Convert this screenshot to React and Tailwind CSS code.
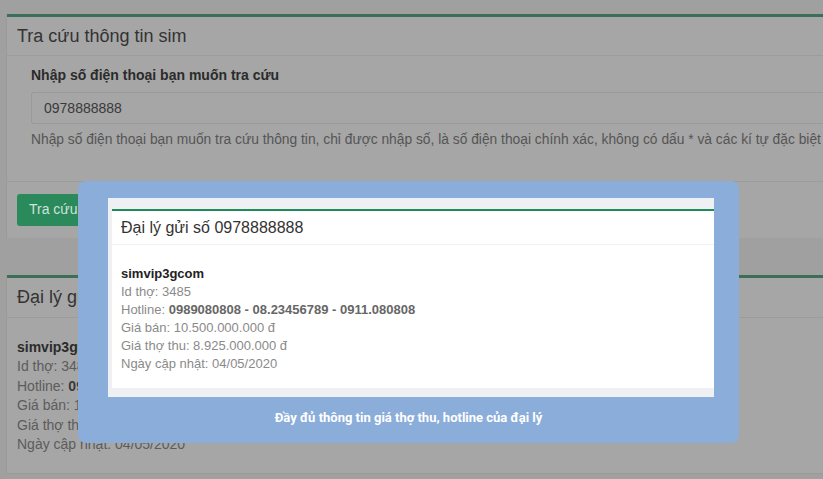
import React from "react";

const font = { fontFamily: '"Liberation Sans", Arial, sans-serif' };

// Trang nền (đã bị phủ mờ bởi lớp overlay)
const LookupCard = () => (
  <div className="ml-[6px] mt-[14px] bg-[#a6a6a6] border-l border-[#9a9a9a]">
    <div className="h-[3px] bg-[#3c6e58]" />
    <div className="h-[39px] flex items-center pl-[10px] border-b border-[#9c9c9c]">
      <h2 className="text-[18px] text-[#333]">Tra cứu thông tin sim</h2>
    </div>
    <div className="pl-[24px] pt-[9px] pb-[30px] border-b border-[#9c9c9c]">
      <label className="block text-[14px] font-bold text-[#2b2b2b] mb-[6px]">
        Nhập số điện thoại bạn muốn tra cứu
      </label>
      <div className="h-[32px] border border-[#9a9a9a] rounded-l-[3px] border-r-0 flex items-center pl-[12px] text-[14px] text-[#3a3a3a]">
        0978888888
      </div>
      <p className="mt-[6px] text-[13.8px] text-[#555] whitespace-nowrap overflow-hidden">
        Nhập số điện thoại bạn muốn tra cứu thông tin, chỉ được nhập số, là số điện thoại chính xác, không có dấu * và các kí tự đặc biệt Khác
      </p>
    </div>
    <div className="pl-[10px] pt-[12px] pb-[12px]">
      <button className="h-[32px] px-[12px] rounded-[3px] bg-[#2a8a5b] text-[14px] text-[#cfe3d8]">
        Tra cứu
      </button>
    </div>
  </div>
);

const AgentCard = () => (
  <div className="ml-[6px] mt-[37px] bg-[#a6a6a6] border-l border-[#9a9a9a] border-b">
    <div className="h-[3px] bg-[#3c6e58]" />
    <div className="h-[40px] flex items-center pl-[10px] border-b border-[#9c9c9c]">
      <h2 className="text-[18px] text-[#333]">Đại lý gửi số 0978888888</h2>
    </div>
    <div className="pl-[10px] pt-[20px] pb-[18px] text-[14px] leading-[19.5px] text-[#5c5c5c]">
      <p className="font-bold text-[#2b2b2b]">simvip3gcom</p>
      <p>Id thợ: 3485</p>
      <p>
        Hotline: <b className="text-[#3a3a3a]">0989080808 - 08.23456789 - 0911.080808</b>
      </p>
      <p>Giá bán: 10.500.000.000 đ</p>
      <p>Giá thợ thu: 8.925.000.000 đ</p>
      <p>Ngày cập nhật: 04/05/2020</p>
    </div>
  </div>
);

// Hộp minh hoạ nổi phía trên
const PreviewModal = () => (
  <div className="absolute left-[78px] top-[181px] w-[661px] h-[262px] rounded-[8px] bg-[#8badda] flex flex-col items-center pt-[17px]">
    <div className="w-[606px] h-[199px] bg-[#eef0f4] pl-[4px] pt-[11px] pb-[9px] self-start ml-[30px]">
      <div className="h-full bg-white flex flex-col">
        <div className="h-[2px] bg-[#1f8a5c]" />
        <div className="h-[34px] flex items-center pl-[9px] border-b border-[#f1f1f1]">
          <span className="text-[16px] text-[#333]">Đại lý gửi số 0978888888</span>
        </div>
        <div className="pl-[9px] pt-[20px] text-[13px] leading-[18px] text-[#8a8a8a]">
          <p className="font-bold text-[#222]">simvip3gcom</p>
          <p>Id thợ: 3485</p>
          <p>
            Hotline: <b className="text-[#666]">0989080808 - 08.23456789 - 0911.080808</b>
          </p>
          <p>Giá bán: 10.500.000.000 đ</p>
          <p>Giá thợ thu: 8.925.000.000 đ</p>
          <p>Ngày cập nhật: 04/05/2020</p>
        </div>
      </div>
    </div>
    <p
      className="mt-[11px] text-[13px] font-bold text-white"
      style={{ fontFamily: 'Roboto, "Liberation Sans", sans-serif' }}>
      Đầy đủ thông tin giá thợ thu, hotline của đại lý
    </p>
  </div>
);

export default function App() {
  return (
    <div className="relative w-full h-[479px] overflow-hidden bg-[#a0a0a0]" style={font}>
      <LookupCard />
      <AgentCard />
      <PreviewModal />
    </div>
  );
}
